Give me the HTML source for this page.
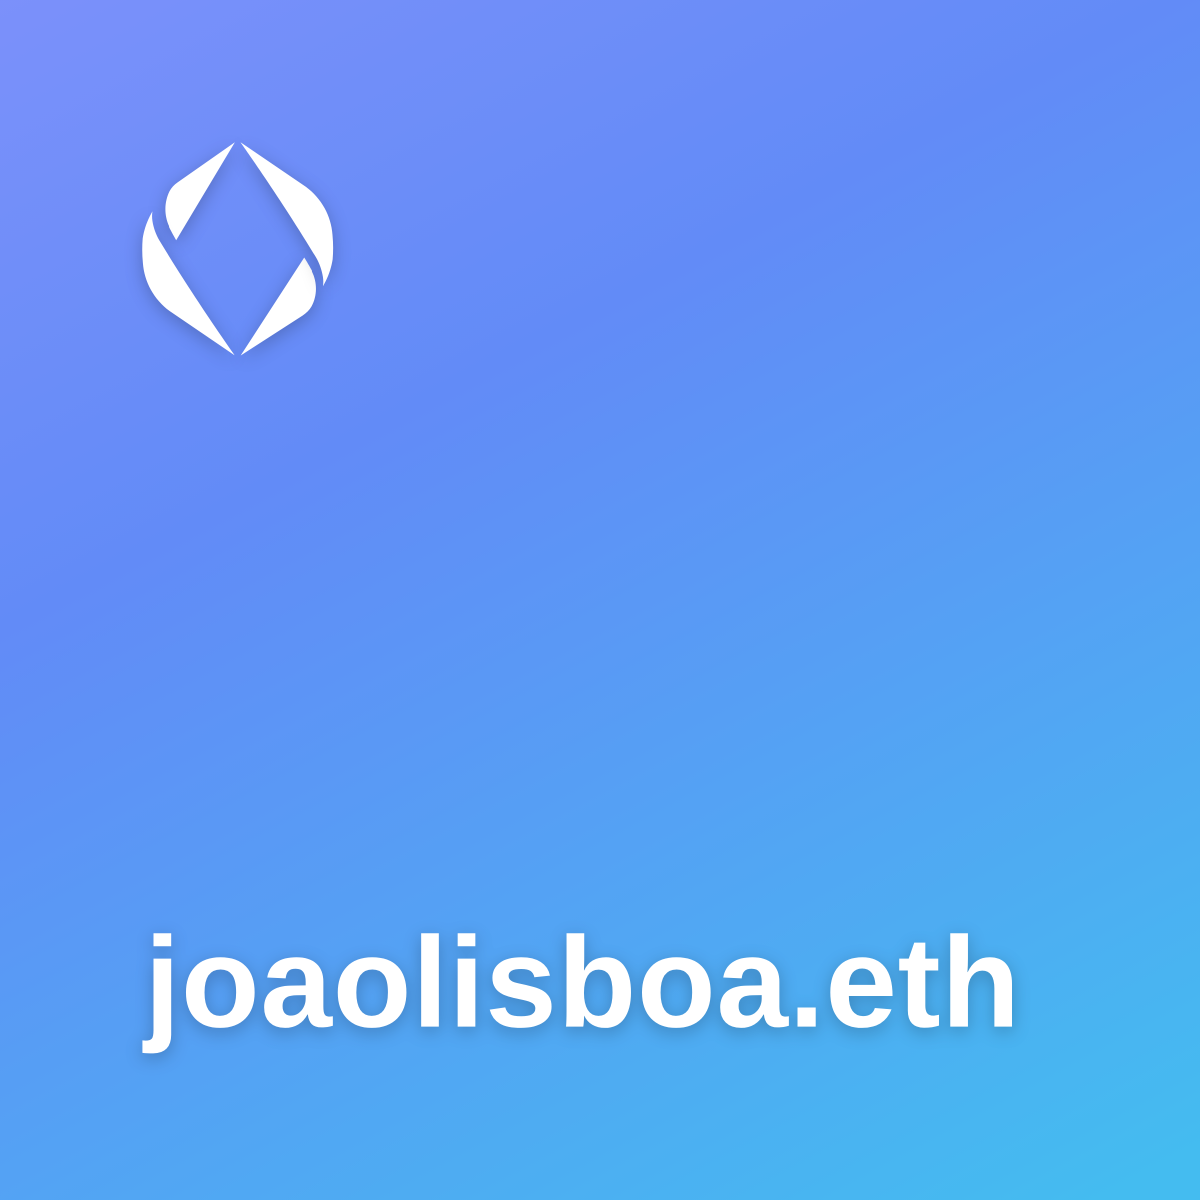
<!DOCTYPE html>
<html><head><meta charset="utf-8"><style>html,body{margin:0;padding:0;width:1200px;height:1200px;overflow:hidden}svg{display:block}</style></head>
<body>
<svg xmlns="http://www.w3.org/2000/svg" width="1200" height="1200" viewBox="0 0 270 270" fill="none">
<defs>
<linearGradient id="g" x1="190.5" y1="302" x2="-64" y2="-172.5" gradientUnits="userSpaceOnUse"><stop stop-color="#44BCF0"/><stop offset="0.428185" stop-color="#628BF7"/><stop offset="1" stop-color="#A099FF"/></linearGradient>
<filter id="ds" color-interpolation-filters="sRGB" filterUnits="userSpaceOnUse" x="0" y="0" height="270" width="270"><feDropShadow dx="0" dy="1" stdDeviation="2" flood-opacity="0.225"/></filter>
</defs>
<rect width="270" height="270" fill="url(#g)"/>
<path d="M38.0397 51.0875C38.5012 52.0841 39.6435 54.0541 39.6435 54.0541L52.8484 32L39.9608 41.0206C39.1928 41.5386 38.5628 42.2376 38.1263 43.0564C37.5393 44.2742 37.2274 45.6078 37.2125 46.9599C37.1975 48.312 37.4799 49.6522 38.0397 50.8825Z" fill="white" filter="url(#ds)"/>
<path d="M32.152 59.1672C32.3024 61.2771 32.9122 63.3312 33.9405 65.1919C34.9689 67.0527 36.3921 68.6772 38.1147 69.9567L52.8487 80C52.8487 80 43.6303 67.013 35.8549 54.0902C35.0677 52.7249 34.5385 51.2322 34.2926 49.6835C34.1838 48.9822 34.1838 48.2689 34.2926 47.5676C34.0899 47.9348 33.6964 48.6867 33.6964 48.6867C32.908 50.2586 32.371 51.9394 32.1043 53.6705C31.9508 55.5004 31.9668 57.3401 32.152 59.1672Z" fill="white" filter="url(#ds)"/>
<path d="M70.1927 60.9125C69.6928 59.9159 68.4555 57.946 68.4555 57.946L54.1514 80L68.1118 70.9794C68.9436 70.4614 69.6261 69.7624 70.099 68.9436C70.7358 67.7261 71.0741 66.3925 71.0903 65.0402C71.1065 63.6879 70.8001 62.3478 70.1927 61.1175Z" fill="white" filter="url(#ds)"/>
<path d="M74.8068 52.8328C74.6564 50.7229 74.0466 48.6688 73.0182 46.8081C71.9899 44.9473 70.5667 43.3228 68.8441 42.0433L54.1101 32C54.1101 32 63.3285 44.987 71.1039 57.9098C71.8889 59.2755 72.4162 60.7682 72.6603 62.3165C72.7691 63.0178 72.7691 63.7311 72.6603 64.4324C72.863 64.0652 73.2565 63.3133 73.2565 63.3133C74.0449 61.7414 74.5819 60.0606 74.8486 58.3295C75.0032 56.4998 74.9882 54.6601 74.8068 52.8328Z" fill="white" filter="url(#ds)"/>
<text x="32.5" y="231" font-size="29" font-weight="bold" font-family="'Liberation Sans', sans-serif" fill="white" filter="url(#ds)" textLength="197" lengthAdjust="spacing">joaolisboa.eth</text>
</svg>
</body></html>
